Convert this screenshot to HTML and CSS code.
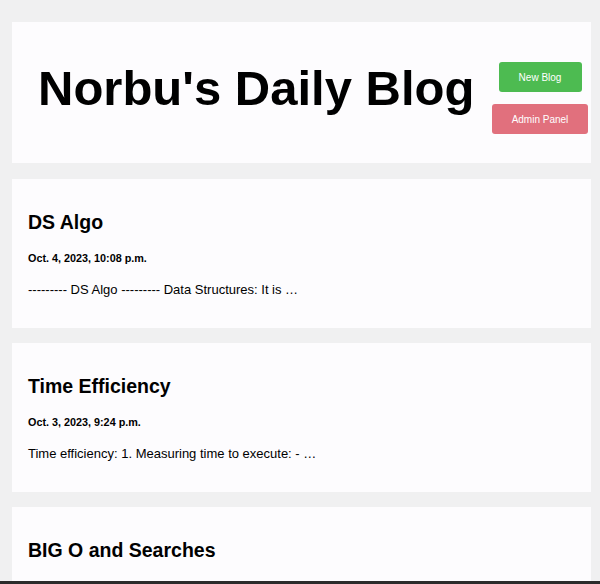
FILE: index.html
```html
<!DOCTYPE html>
<html lang="en">
<head>
<meta charset="utf-8">
<title>Norbu's Daily Blog</title>
<link rel="stylesheet" href="styles.css">
</head>
<body>
<div class="page">
  <header class="masthead">
    <h1 class="site-title">Norbu's Daily Blog</h1>
    <div class="actions">
      <a class="btn btn-green" href="#">New Blog</a>
      <a class="btn btn-red" href="#">Admin Panel</a>
    </div>
  </header>

  <article class="post">
    <h2 class="post-title">DS Algo</h2>
    <p class="post-date">Oct. 4, 2023, 10:08 p.m.</p>
    <p class="post-excerpt">--------- DS Algo --------- Data Structures: It is …</p>
  </article>

  <article class="post">
    <h2 class="post-title">Time Efficiency</h2>
    <p class="post-date">Oct. 3, 2023, 9:24 p.m.</p>
    <p class="post-excerpt">Time efficiency: 1. Measuring time to execute: - …</p>
  </article>

  <article class="post">
    <h2 class="post-title">BIG O and Searches</h2>
    <p class="post-date">Oct. 2, 2023, 8:15 p.m.</p>
    <p class="post-excerpt">Big O notation: …</p>
  </article>
</div>
<div class="bottom-bar"></div>
</body>
</html>
```

FILE: styles.css
```css
html, body {
  margin: 0;
  padding: 0;
  background: #f0f0f1;
  font-family: "Liberation Sans", Arial, sans-serif;
  color: #000;
}

.page {
  padding: 22px 9px 0 12px;
  display: flex;
  flex-direction: column;
  gap: 15px;
}

.masthead {
  background: #fdfcfe;
  display: flex;
  align-items: flex-start;
  padding: 38px 3px 29px 26px;
  margin-bottom: 1px;
}

.site-title {
  flex: 1;
  margin: 0;
  font-size: 49px;
  line-height: 56px;
  font-weight: bold;
}

.actions {
  margin-top: 2px;
  width: 96px;
  display: flex;
  flex-direction: column;
  align-items: center;
  gap: 12px;
}

.btn {
  display: flex;
  align-items: center;
  justify-content: center;
  height: 30px;
  box-sizing: border-box;
  border-radius: 3px;
  color: #fff;
  font-size: 10px;
  text-decoration: none;
}

.btn-green {
  background: #4dbb51;
  width: 83px;
}

.btn-red {
  background: #e1707d;
  width: 96px;
}

.post {
  background: #fdfcfe;
  padding: 32px 16px 30px 16px;
}

.post-title {
  margin: 0;
  font-size: 19.5px;
  line-height: 22px;
  font-weight: bold;
}

.post-date {
  margin: 19px 0 0 0;
  font-size: 10.8px;
  line-height: 13px;
  font-weight: bold;
}

.post-excerpt {
  margin: 17px 0 0 0;
  font-size: 13px;
  line-height: 16px;
}

.bottom-bar {
  position: fixed;
  left: 0;
  right: 0;
  bottom: 0;
  height: 3px;
  background: #2b2b2b;
}
```
